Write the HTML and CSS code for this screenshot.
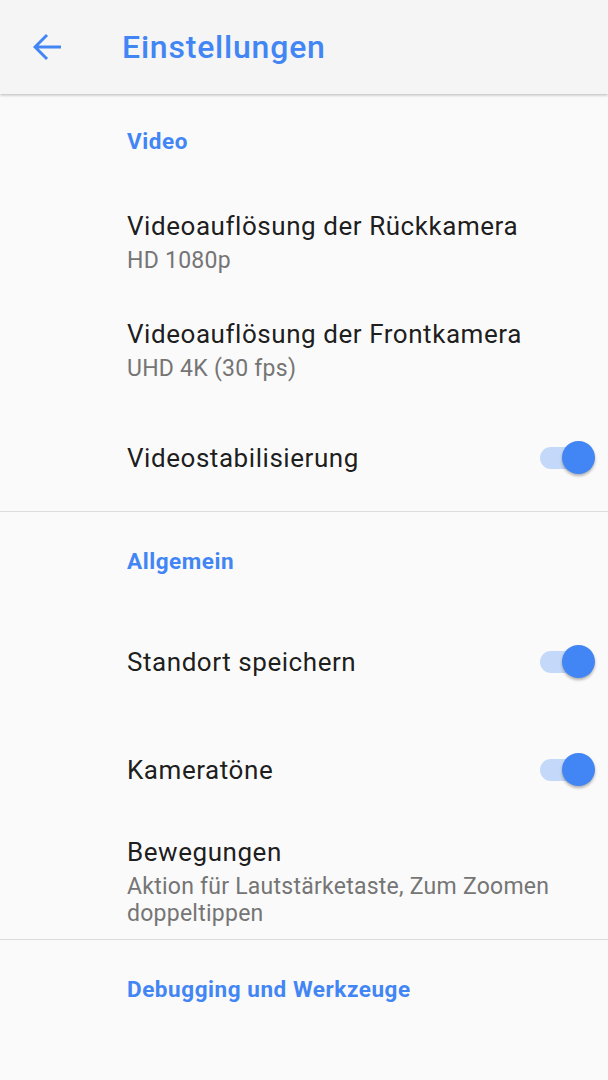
FILE: index.html
```html
<!DOCTYPE html>
<html>
  <head>
    <meta charset="utf-8">
    <title>Einstellungen</title>
    <link rel="stylesheet" href="styles.css">
  </head>
<body>
    <!-- Toolbar -->
    <div class="toolbar">
        <svg class="back" width="30" height="30" viewBox="0 0 30 30">
            <path d="M2 15 H28 M14 3 L2 15 L14 27" fill="none" stroke="#4285f4" stroke-width="3"/>
        </svg>
        <span class="toolbar-title">Einstellungen</span>
    </div>

    <!-- Video -->
    <div class="category first">Video</div>
    <div class="pref">
        <div class="pref-text">
            <div class="pref-title">Videoauflösung der Rückkamera</div>
            <div class="pref-sub">HD 1080p</div>
        </div>
    </div>
    <div class="pref">
        <div class="pref-text">
            <div class="pref-title">Videoauflösung der Frontkamera</div>
            <div class="pref-sub">UHD 4K (30 fps)</div>
        </div>
    </div>
    <div class="pref">
        <div class="pref-text">
            <div class="pref-title">Videostabilisierung</div>
        </div>
        <div class="switch"><div class="track"></div><div class="thumb"></div></div>
    </div>
    <div class="divider"></div>

    <!-- Allgemein -->
    <div class="category">Allgemein</div>
    <div class="pref">
        <div class="pref-text">
            <div class="pref-title">Standort speichern</div>
        </div>
        <div class="switch"><div class="track"></div><div class="thumb"></div></div>
    </div>
    <div class="pref">
        <div class="pref-text">
            <div class="pref-title">Kameratöne</div>
        </div>
        <div class="switch"><div class="track"></div><div class="thumb"></div></div>
    </div>
    <div class="pref multi">
        <div class="pref-text">
            <div class="pref-title">Bewegungen</div>
            <div class="pref-sub">Aktion für Lautstärketaste, Zum Zoomen doppeltippen</div>
        </div>
    </div>
    <div class="divider"></div>

    <!-- Debugging -->
    <div class="category">Debugging und Werkzeuge</div>
</body>
</html>
```

FILE: styles.css
```css
* {
    box-sizing: border-box;
}
body {
    margin: 0;
    background: #fafafa;
    font-family: Roboto, "Noto Sans", sans-serif;
}
.toolbar {
    height: 94px;
    display: flex;
    align-items: center;
    background: #f5f5f5;
    box-shadow: 0 1px 3px rgba(0, 0, 0, 0.28);
    position: relative;
}
.back {
    margin-left: 33px;
    margin-right: 59px;
}
.toolbar-title {
    font-size: 32px;
    font-weight: 500;
    letter-spacing: 0.8px;
    color: #4285f4;
    line-height: 36px;
}
.category {
    padding: 35px 0 32px 127px;
    font-size: 22.5px;
    font-weight: 700;
    letter-spacing: 0.55px;
    line-height: 28px;
    color: #4285f4;
}
.category.first {
    padding-top: 33px;
}
.pref {
    display: flex;
    align-items: center;
    min-height: 108px;
    padding: 1px 12px 0 127px;
}
.pref.multi {
    padding-top: 13px;
    padding-bottom: 12px;
}
.pref-text {
    flex: 1;
}
.pref-title {
    font-size: 26px;
    letter-spacing: 0.55px;
    line-height: 32px;
    color: rgba(0, 0, 0, 0.9);
}
.pref-sub {
    margin-top: 5px;
    font-size: 23px;
    letter-spacing: 0.25px;
    line-height: 27px;
    color: #757575;
}
.switch {
    position: relative;
    width: 56px;
    height: 34px;
}
.track {
    position: absolute;
    left: 0;
    top: 6px;
    width: 50px;
    height: 22px;
    border-radius: 11px;
    background: #c4d8f9;
}
.thumb {
    position: absolute;
    right: 1px;
    top: 0;
    width: 33px;
    height: 33px;
    border-radius: 50%;
    background: #4285f4;
    box-shadow: 0 2px 3px rgba(0, 0, 0, 0.3);
}
.divider {
    height: 1px;
    background: #dcdcdc;
}
```
